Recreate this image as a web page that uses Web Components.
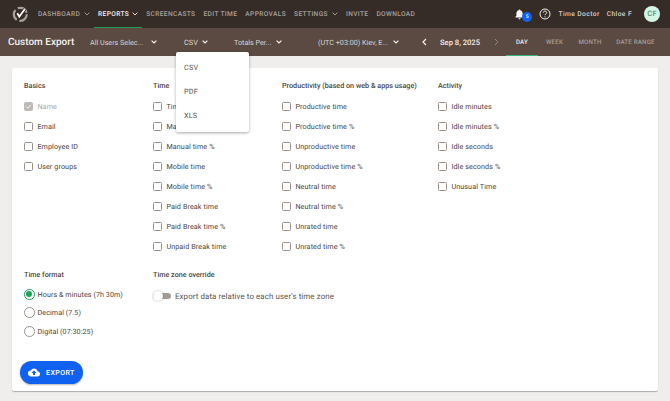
<!DOCTYPE html>
<html>
<head>
<meta charset="utf-8">
<title>Custom Export</title>
<style>
    html, body { margin: 0; padding: 0; height: 100%; overflow: hidden; background: #efeeec; }
    body { font-family: Roboto, "Liberation Sans", sans-serif; color: #3d3733; text-rendering: geometricPrecision; }
</style>
</head>
<body>
<top-nav></top-nav>
<sub-bar></sub-bar>
<export-card>
    <check-group slot="top" title="Basics" items="!Name|Email|Employee ID|User groups"></check-group>
    <check-group slot="top" title="Time" items="Time|Manual time|Manual time %|Mobile time|Mobile time %|Paid Break time|Paid Break time %|Unpaid Break time"></check-group>
    <check-group slot="top" title="Productivity (based on web &amp; apps usage)" items="Productive time|Productive time %|Unproductive time|Unproductive time %|Neutral time|Neutral time %|Unrated time|Unrated time %"></check-group>
    <check-group slot="top" title="Activity" items="Idle minutes|Idle minutes %|Idle seconds|Idle seconds %|Unusual Time"></check-group>
    <radio-group slot="format" title="Time format" items="Hours &amp; minutes (7h 30m)|Decimal (7.5)|Digital (07:30:25)"></radio-group>
    <tz-toggle slot="zone" title="Time zone override">Export data relative to each user's time zone</tz-toggle>
    <export-button slot="action">EXPORT</export-button>
</export-card>
<drop-menu items="CSV|PDF|XLS"></drop-menu>

<script>
const chevron = `<svg width="6" height="4" viewBox="0 0 6 4" fill="none"><path d="M.6.6L3 3 5.4.6" stroke="currentColor" stroke-width=".9"/></svg>`;

customElements.define('top-nav',
    class extends HTMLElement {
        connectedCallback(){
            this.attachShadow({mode: 'open'});
            const links = [['DASHBOARD',1],['REPORTS',1,1],['SCREENCASTS'],['EDIT TIME'],['APPROVALS'],['SETTINGS',1],['INVITE'],['DOWNLOAD']];
            this.shadowRoot.innerHTML = `
    <style>
        :host{
            display: flex;
            align-items: stretch;
            height: 28px;
            background: #362c27;
            box-sizing: border-box;
            padding: 0 10px 0 12px;
            font-family: Roboto, "Liberation Sans", sans-serif;
        }
        .logo{ width: 16px; height: 16px; align-self: center; margin-right: 6px; }
        .links{ display: flex; align-items: stretch; }
        .link{
            display: flex;
            align-items: center;
            gap: 4px;
            padding: 0 4px;
            font-size: 6.6px;
            font-weight: 500;
            letter-spacing: 0.37px;
            color: #a8a09a;
            white-space: nowrap;
            border-bottom: 1px solid transparent;
            box-sizing: border-box;
        }
        .link.on{ color: #f2f0ee; border-bottom-color: #1f9d55; padding: 0 4px; gap: 3px; }
        .right{ margin-left: auto; display: flex; align-items: center; color: #d3cfcb; font-size: 6.7px; font-weight: 500; letter-spacing: 0.4px; }
        .bell{ position: relative; width: 10px; height: 12px; margin-right: 9px; margin-top: 1px; }
        .badge{
            position: absolute; left: 6.7px; top: 3.2px;
            width: 10px; height: 10px; border-radius: 50%;
            background: #0f62f0; color: #fff;
            font-size: 5px; line-height: 10px; text-align: center; letter-spacing: 0;
        }
        .help{ width: 12px; height: 12px; margin: 0 7px 0 5px; }
        .org{ margin-right: 7px; }
        .avatar{
            width: 16px; height: 16px; border-radius: 50%;
            background: #d3f6e7; color: #4f8f78;
            font-size: 7.5px; line-height: 16px; text-align: center; letter-spacing: 0.2px;
            margin-left: 12px;
        }
    </style>
    <svg class="logo" viewBox="0 0 16 16" fill="none">
        <circle cx="8.3" cy="8.3" r="6.5" stroke="#a8a09a" stroke-width="2.2" stroke-dasharray="11 2.6"/>
        <path d="M5.3 7.3l2 3.4 5.4-7.4" stroke="#362c27" stroke-width="3.6"/>
        <path d="M5.3 7.3l2 3.4 5.4-7.4" stroke="#fff" stroke-width="1.8"/>
    </svg>
    <div class="links">
        ${links.map(l => `<div class="link${l[2] ? ' on' : ''}">${l[0]}${l[1] ? chevron : ''}</div>`).join('')}
    </div>
    <div class="right">
        <div class="bell">
            <svg width="9" height="11" viewBox="0 0 9 11"><path d="M4.5 0.4c.5 0 .8.4.8.9 1.6.4 2.3 1.7 2.3 3.2v2.2l1 1.2v.5H.4v-.5l1-1.2V4.5c0-1.5.7-2.8 2.3-3.2 0-.5.3-.9.8-.9zM3.4 9.2h2.2c0 .7-.5 1.2-1.1 1.2s-1.1-.5-1.1-1.2z" fill="#fff"/></svg>
            <div class="badge">5</div>
        </div>
        <svg class="help" viewBox="0 0 12 12" fill="none">
            <circle cx="6" cy="6" r="5" stroke="#f2f0ee" stroke-width="1"/>
            <path d="M4.3 4.7c0-1 .8-1.6 1.7-1.6s1.7.6 1.7 1.5c0 1.2-1.7 1.3-1.7 2.6" stroke="#f2f0ee" stroke-width="1"/>
            <circle cx="6" cy="8.8" r=".6" fill="#f2f0ee"/>
        </svg>
        <span class="org">Time Doctor</span>
        <span>Chloe F</span>
        <div class="avatar">CF</div>
    </div>
`;
        }
    }
);

customElements.define('sub-bar',
    class extends HTMLElement {
        connectedCallback(){
            this.attachShadow({mode: 'open'});
            this.shadowRoot.innerHTML = `
    <style>
        :host{
            display: flex;
            align-items: center;
            height: 28px;
            background: #5a4a41;
            box-sizing: border-box;
            padding-left: 8px;
            color: #ece9e6;
            font-family: Roboto, "Liberation Sans", sans-serif;
            font-size: 7.2px;
        }
        h1{ margin: 0; width: 82px; font-size: 10px; font-weight: 500; color: #f4f2f0; white-space: nowrap; }
        .sel{ display: flex; align-items: center; white-space: nowrap; color: #d9d5d1; }
        .sel svg{ color: #f4f2f0; }
        .sel svg path{ stroke-width: 1.2; }
        .users{ width: 94px; gap: 8px; }
        .fmt{ width: 50px; gap: 4px; font-size: 7.4px; }
        .tot{ width: 84px; gap: 4px; }
        .zone{ width: 104px; gap: 5px; }
        .date{ display: flex; align-items: center; width: 84px; font-weight: 500; font-size: 7.6px; color: #f0eeec; }
        .date span{ margin: 0 14px 0 13px; white-space: nowrap; }
        .tabs{ display: flex; align-self: stretch; font-size: 6.2px; font-weight: 500; letter-spacing: 0.18px; color: #a89e97; }
        .tab{ display: flex; align-items: center; justify-content: center; box-sizing: border-box; border-bottom: 1px solid transparent; white-space: nowrap; width: 32px; }
        .tab.on{ color: #ebe8e5; border-bottom-color: #35b57a; }
    </style>
    <h1>Custom Export</h1>
    <div class="sel users">All Users Selec...${chevron}</div>
    <div class="sel fmt">CSV${chevron}</div>
    <div class="sel tot">Totals Per...${chevron}</div>
    <div class="sel zone">(UTC +03:00) Kiev, E...${chevron}</div>
    <div class="date">
        <svg width="5" height="8" viewBox="0 0 5 8" fill="none"><path d="M4 1L1 4l3 3" stroke="#f4f2f0" stroke-width="1.2"/></svg>
        <span>Sep 8, 2025</span>
        <svg width="5" height="8" viewBox="0 0 5 8" fill="none"><path d="M1 1l3 3-3 3" stroke="#8f847c" stroke-width="1"/></svg>
    </div>
    <div class="tabs">
        <div class="tab on">DAY</div>
        <div class="tab" style="width:33px">WEEK</div>
        <div class="tab" style="width:38px">MONTH</div>
        <div class="tab" style="width:53px">DATE RANGE</div>
    </div>
`;
        }
    }
);

customElements.define('export-card',
    class extends HTMLElement {
        connectedCallback(){
            this.attachShadow({mode: 'open'});
            this.shadowRoot.innerHTML = `
    <style>
        :host{
            display: block;
            margin: 12px 12px 0;
            height: 323px;
            box-sizing: border-box;
            padding: 13px 12px 0;
            background: #fff;
            border-radius: 2px;
            box-shadow: 0 1px 1px rgba(0,0,0,.28);
        }
        .top{ display: grid; grid-template-columns: 129px 129px 156px 1fr; height: 189px; }
        .bottom{ display: grid; grid-template-columns: 129px 1fr; height: 91px; }
        .action{ margin-left: -4px; }
    </style>
    <div class="top"><slot name="top"></slot></div>
    <div class="bottom"><slot name="format"></slot><slot name="zone"></slot></div>
    <div class="action"><slot name="action"></slot></div>
`;
        }
    }
);

const groupStyle = `
        :host{ display: block; font-family: Roboto, "Liberation Sans", sans-serif; }
        .title{ font-size: 7.2px; font-weight: 500; line-height: 10px; color: #4a4440; white-space: nowrap; }
`;

customElements.define('check-group',
    class extends HTMLElement {
        connectedCallback(){
            this.attachShadow({mode: 'open'});
            const items = this.getAttribute('items').split('|');
            this.shadowRoot.innerHTML = `
    <style>
        ${groupStyle}
        .list{ margin-top: 5px; display: flex; flex-direction: column; }
        .row{ display: flex; align-items: center; height: 20px; gap: 4.4px; font-size: 7.2px; color: #4a4440; letter-spacing: 0.1px; white-space: nowrap; }
        .box{ width: 7px; height: 7px; border: 0.8px solid #9c918a; border-radius: 1.5px; flex: none; }
        .row.off{ color: #a9a5a2; }
        .row.off .box{ background: #bdb9b6; border-color: #bdb9b6; display: flex; }
    </style>
    <div class="title">${this.getAttribute('title').replace('&', '&amp;')}</div>
    <div class="list">
        ${items.map(t => {
            const off = t[0] === '!';
            return `<div class="row${off ? ' off' : ''}"><div class="box">${off ? '<svg width="7" height="7" viewBox="0 0 8 8" fill="none"><path d="M1.4 4.2l1.8 1.8 3.4-3.8" stroke="#fff" stroke-width="1"/></svg>' : ''}</div>${off ? t.slice(1) : t}</div>`;
        }).join('')}
    </div>
`;
        }
    }
);

customElements.define('radio-group',
    class extends HTMLElement {
        connectedCallback(){
            this.attachShadow({mode: 'open'});
            const items = this.getAttribute('items').split('|');
            this.shadowRoot.innerHTML = `
    <style>
        ${groupStyle}
        .list{ margin-top: 5px; display: flex; flex-direction: column; }
        .row{ display: flex; align-items: center; height: 18.5px; gap: 3px; font-size: 7.2px; color: #4a4440; letter-spacing: 0.05px; white-space: nowrap; }
        .dot{ width: 8.6px; height: 8.6px; border: 0.8px solid #9c918a; border-radius: 50%; flex: none; position: relative; }
        .row.on .dot{ border-color: #1fa35c; }
        .row.on .dot::after{ content: ''; position: absolute; inset: 1.4px; border-radius: 50%; background: #1fa35c; }
    </style>
    <div class="title">${this.getAttribute('title')}</div>
    <div class="list">
        ${items.map((t, i) => `<div class="row${i === 0 ? ' on' : ''}"><div class="dot"></div>${t.replace('&', '&amp;')}</div>`).join('')}
    </div>
`;
        }
    }
);

customElements.define('tz-toggle',
    class extends HTMLElement {
        connectedCallback(){
            this.attachShadow({mode: 'open'});
            this.shadowRoot.innerHTML = `
    <style>
        ${groupStyle}
        .row{ margin-top: 6px; display: flex; align-items: center; height: 20px; gap: 4px; font-size: 7.9px; color: #5a5450; letter-spacing: 0.1px; white-space: nowrap; }
        .track{ width: 18px; height: 6px; background: #a39b95; border-radius: 3px; position: relative; flex: none; }
        .knob{ position: absolute; left: 0; top: -2px; width: 10px; height: 10px; background: #fff; border-radius: 50%; box-shadow: 0 0 2px rgba(0,0,0,.35); }
    </style>
    <div class="title">${this.getAttribute('title')}</div>
    <div class="row"><div class="track"><div class="knob"></div></div><slot></slot></div>
`;
        }
    }
);

customElements.define('export-button',
    class extends HTMLElement {
        connectedCallback(){
            this.attachShadow({mode: 'open'});
            this.shadowRoot.innerHTML = `
    <style>
        :host{
            display: inline-flex;
            align-items: center;
            gap: 6px;
            width: 63px;
            height: 23px;
            box-sizing: border-box;
            padding-left: 8px;
            background: #0f62f0;
            color: #fff;
            border-radius: 12px;
            box-shadow: 0 1px 2px rgba(0,0,0,.3);
            font-family: Roboto, "Liberation Sans", sans-serif;
            font-size: 7px;
            font-weight: 500;
            letter-spacing: 0.45px;
        }
    </style>
    <svg width="12" height="9" viewBox="0 0 12 9"><path d="M9.7 3.4A3.7 3.7 0 0 0 2.8 2.4 3 3 0 0 0 3 8.4h6.4a2.5 2.5 0 0 0 .3-5zM7 5v2H5V5H3.4L6 2.4 8.6 5H7z" fill="#fff"/></svg>
    <slot></slot>
`;
        }
    }
);

customElements.define('drop-menu',
    class extends HTMLElement {
        connectedCallback(){
            this.attachShadow({mode: 'open'});
            const items = this.getAttribute('items').split('|');
            this.shadowRoot.innerHTML = `
    <style>
        :host{
            position: absolute;
            left: 176px;
            top: 52px;
            width: 73px;
            height: 80px;
            box-sizing: border-box;
            padding-top: 3.5px;
            background: #fff;
            border-radius: 2px;
            box-shadow: 0 1px 3px rgba(0,0,0,.35);
            font-family: Roboto, "Liberation Sans", sans-serif;
        }
        .item{ height: 24px; line-height: 24px; padding-left: 8px; font-size: 7.3px; color: #5a5450; letter-spacing: 0.15px; }
    </style>
    ${items.map(t => `<div class="item">${t}</div>`).join('')}
`;
        }
    }
);
</script>
</body>
</html>
